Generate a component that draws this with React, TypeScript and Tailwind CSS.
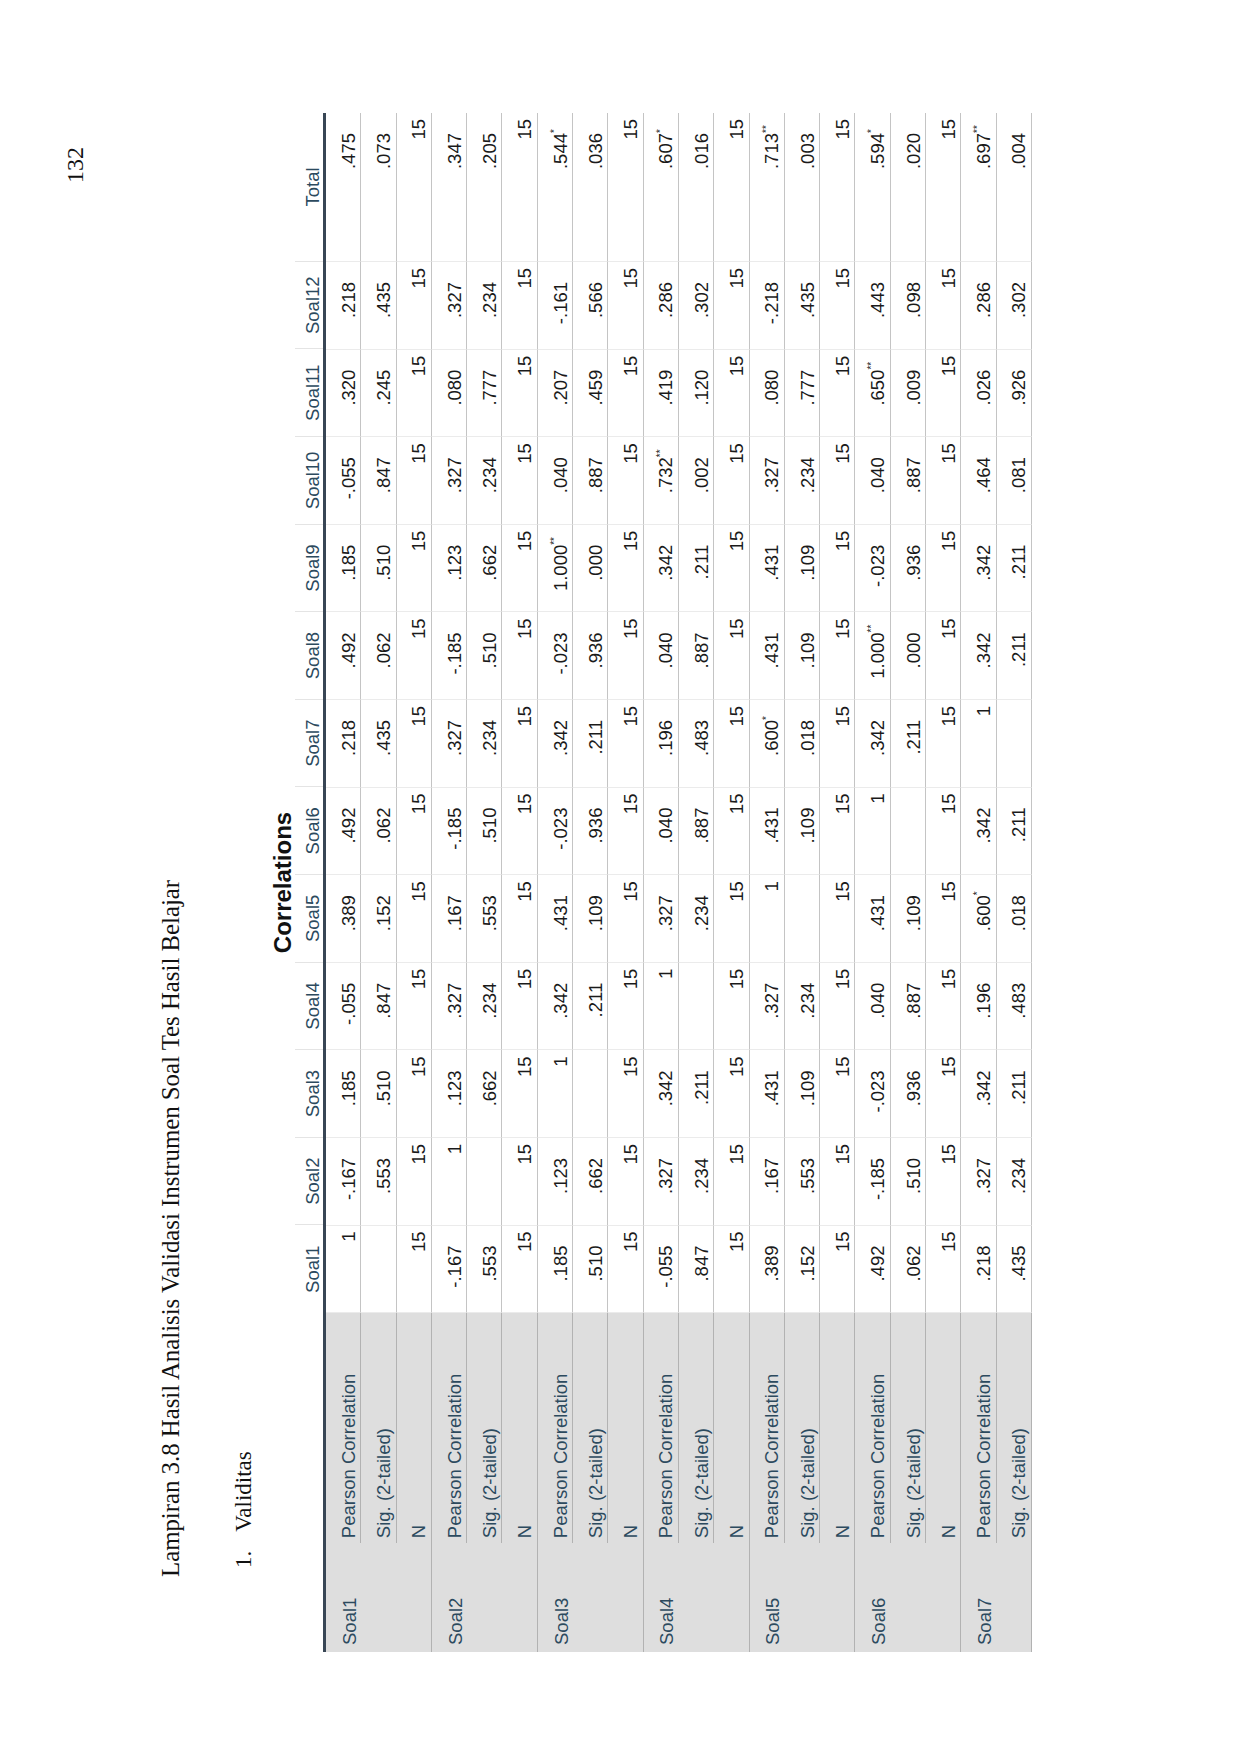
import React from "react";

const columns = [
  "Soal1",
  "Soal2",
  "Soal3",
  "Soal4",
  "Soal5",
  "Soal6",
  "Soal7",
  "Soal8",
  "Soal9",
  "Soal10",
  "Soal11",
  "Soal12",
];

const n15 = Array(13).fill("15");

// each group: Pearson, Sig. (2-tailed), N (last group is cut off by the page)
const groups: { name: string; rows: string[][] }[] = [
  {
    name: "Soal1",
    rows: [
      ["1", "-.167", ".185", "-.055", ".389", ".492", ".218", ".492", ".185", "-.055", ".320", ".218", ".475"],
      ["", ".553", ".510", ".847", ".152", ".062", ".435", ".062", ".510", ".847", ".245", ".435", ".073"],
      n15,
    ],
  },
  {
    name: "Soal2",
    rows: [
      ["-.167", "1", ".123", ".327", ".167", "-.185", ".327", "-.185", ".123", ".327", ".080", ".327", ".347"],
      [".553", "", ".662", ".234", ".553", ".510", ".234", ".510", ".662", ".234", ".777", ".234", ".205"],
      n15,
    ],
  },
  {
    name: "Soal3",
    rows: [
      [".185", ".123", "1", ".342", ".431", "-.023", ".342", "-.023", "1.000**", ".040", ".207", "-.161", ".544*"],
      [".510", ".662", "", ".211", ".109", ".936", ".211", ".936", ".000", ".887", ".459", ".566", ".036"],
      n15,
    ],
  },
  {
    name: "Soal4",
    rows: [
      ["-.055", ".327", ".342", "1", ".327", ".040", ".196", ".040", ".342", ".732**", ".419", ".286", ".607*"],
      [".847", ".234", ".211", "", ".234", ".887", ".483", ".887", ".211", ".002", ".120", ".302", ".016"],
      n15,
    ],
  },
  {
    name: "Soal5",
    rows: [
      [".389", ".167", ".431", ".327", "1", ".431", ".600*", ".431", ".431", ".327", ".080", "-.218", ".713**"],
      [".152", ".553", ".109", ".234", "", ".109", ".018", ".109", ".109", ".234", ".777", ".435", ".003"],
      n15,
    ],
  },
  {
    name: "Soal6",
    rows: [
      [".492", "-.185", "-.023", ".040", ".431", "1", ".342", "1.000**", "-.023", ".040", ".650**", ".443", ".594*"],
      [".062", ".510", ".936", ".887", ".109", "", ".211", ".000", ".936", ".887", ".009", ".098", ".020"],
      n15,
    ],
  },
  {
    name: "Soal7",
    rows: [
      [".218", ".327", ".342", ".196", ".600*", ".342", "1", ".342", ".342", ".464", ".026", ".286", ".697**"],
      [".435", ".234", ".211", ".483", ".018", ".211", "", ".211", ".211", ".081", ".926", ".302", ".004"],
    ],
  },
];

const statLabels = ["Pearson Correlation", "Sig. (2-tailed)", "N"];

const Value = ({ v }: { v: string }) => {
  if (!v) return null;
  const num = v.replace(/\*+$/, "");
  const mark = v.slice(num.length);
  const isInt = /^-?\d+$/.test(num);
  return (
    <>
      <span>{num}</span>
      {!isInt && (
        <span className="w-[14px] self-start mt-[12px] text-left text-[10px] leading-none">
          {mark}
        </span>
      )}
    </>
  );
};

const DataCell = ({ v, wide }: { v: string; wide?: boolean }) => (
  <div
    className={`${wide ? "w-[149px]" : "w-[87.6px]"} h-[35.3px] flex items-end justify-end pb-[2px] pr-[6px] border-b border-l border-b-[#c4c4c4] border-l-[#ebebeb] text-[#1a1a1a]`}
  >
    <Value v={v} />
  </div>
);

export default function App() {
  return (
    <div className="w-[1241px] h-[1754px] overflow-hidden bg-white">
      <div className="w-[1754px] h-[1241px] origin-top-left -rotate-90 translate-y-[1754px] bg-white font-['Liberation_Sans',Arial,sans-serif]">
        <div className="pt-[63px]">
          <div className="h-[24px] pr-[147px] text-right text-[24px] leading-[24px] text-[#111] font-['Liberation_Serif','Times_New_Roman',serif]">
            132
          </div>

          <h1 className="mt-[71px] h-[25px] pl-[177px] text-[24.8px] leading-[25px] text-[#111] font-['Liberation_Serif','Times_New_Roman',serif]">
            Lampiran 3.8 Hasil Analisis Validasi Instrumen Soal Tes Hasil Belajar
          </h1>

          <div className="mt-[49px] h-[24px] pl-[186px] text-[23px] leading-[24px] text-[#111] font-['Liberation_Serif','Times_New_Roman',serif]">
            1.<span className="ml-[19px]">Validitas</span>
          </div>

          <div className="ml-[102px] w-[1539px]">
            <div className="mt-[15px] h-[24px] text-center text-[24px] leading-[24px] font-bold text-[#111]">
              Correlations
            </div>

            {/* header */}
            <div className="flex h-[31px] items-end border-b-[3px] border-[#384655] text-[18.5px] leading-[18.5px] text-[#2c4a5e]">
              <div className="w-[339px]" />
              {columns.map((c, i) => (
                <div
                  key={c}
                  className={`w-[87.6px] h-full flex items-end justify-center pb-[1px] ${i > 0 ? "border-l border-[#e4e4e4]" : ""}`}
                >
                  {c}
                </div>
              ))}
              <div className="w-[149px] h-full flex items-end justify-center pb-[1px] border-l border-[#e4e4e4]">
                Total
              </div>
            </div>

            {/* body */}
            <div className="text-[18.5px] leading-[18.5px]">
              {groups.map((g) => (
                <div key={g.name} className="flex">
                  <div className="w-[109px] bg-[#dedede] border-b border-[#b2b2b2] text-[#2c4a5e]">
                    <div className="h-[35.3px] flex items-end pb-[2px] pl-[7px]">{g.name}</div>
                  </div>
                  <div className="flex flex-col">
                    {g.rows.map((r, ri) => (
                      <div key={ri} className="flex">
                        <div className="w-[230px] h-[35.3px] flex items-end pb-[2px] pl-[5px] bg-[#dedede] border-b border-[#b2b2b2] text-[#2c4a5e]">
                          {statLabels[ri]}
                        </div>
                        {r.map((v, ci) => (
                          <DataCell key={ci} v={v} wide={ci === 12} />
                        ))}
                      </div>
                    ))}
                  </div>
                </div>
              ))}
            </div>
          </div>
        </div>
      </div>
    </div>
  );
}
